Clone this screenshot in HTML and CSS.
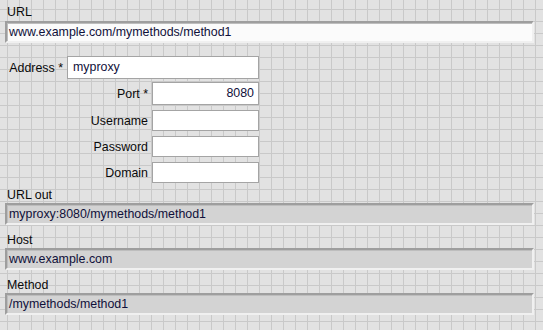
FILE: index.html
```html
<!DOCTYPE html>
<html>
<head>
<meta charset="utf-8">
<link rel="stylesheet" href="styles.css">
</head>
<body>
<div class="page">
  <div class="label label-url">URL</div>
  <div class="field field-in">www.example.com/mymethods/method1</div>

  <div class="form">
    <div class="row row-address">
      <span class="row-label">Address *</span>
      <div class="box box-wide">myproxy</div>
    </div>
    <div class="row row-port">
      <span class="row-label">Port *</span>
      <div class="box box-num">8080</div>
    </div>
    <div class="row row-small">
      <span class="row-label">Username</span>
      <div class="box"></div>
    </div>
    <div class="row row-small">
      <span class="row-label">Password</span>
      <div class="box"></div>
    </div>
    <div class="row row-small">
      <span class="row-label">Domain</span>
      <div class="box"></div>
    </div>
  </div>

  <div class="label label-out1">URL out</div>
  <div class="field field-out">myproxy:8080/mymethods/method1</div>
  <div class="label label-out">Host</div>
  <div class="field field-out">www.example.com</div>
  <div class="label label-out">Method</div>
  <div class="field field-out">/mymethods/method1</div>
</div>
</body>
</html>
```

FILE: styles.css
```css
html, body {
  margin: 0;
  padding: 0;
}
body {
  width: 543px;
  height: 330px;
  overflow: hidden;
  background-color: #e2e2e2;
  background-image:
    linear-gradient(to right, #c9c9c9 1px, transparent 1px),
    linear-gradient(to bottom, #c9c9c9 1px, transparent 1px);
  background-size: 12px 12px;
  background-position: 7px 9px;
  font-family: "Liberation Sans", Arial, sans-serif;
  font-size: 12.4px;
  color: #000;
}
.page {
  display: flex;
  flex-direction: column;
  padding: 5px 9px 0 5px;
}
.label {
  height: 14px;
  line-height: 14px;
  padding-left: 2px;
  color: #0a0a0a;
}
.label-url {
  margin-bottom: 2px;
}
.label-out1 {
  margin-top: 5px;
  margin-bottom: 1px;
}
.label-out {
  margin-top: 8px;
  margin-bottom: 1px;
}
.field {
  box-sizing: border-box;
  height: 22px;
  width: 529px;
  line-height: 18px;
  padding-left: 2px;
  border-style: solid;
  border-width: 2px;
  border-color: #9e9e9e #f0f0f0 #f0f0f0 #9e9e9e;
  box-shadow: inset 1px 1px 0 #bdbdbd;
  white-space: nowrap;
}
.field-in {
  background: #fbfbfb;
  color: #10103a;
}
.field-out {
  background: #d3d3d3;
  color: #10103a;
}
.form {
  display: flex;
  flex-direction: column;
  width: 254px;
  margin-top: 13px;
}
.row {
  display: flex;
  justify-content: flex-end;
  align-items: center;
  gap: 4px;
}
.row-label {
  white-space: nowrap;
  color: #0a0a0a;
}
.box {
  box-sizing: border-box;
  width: 107px;
  height: 21px;
  background: #ffffff;
  border: 1px solid #a4a4a4;
  line-height: 19px;
  padding: 0 5px;
  color: #10103a;
}
.row-address .box,
.row-port .box {
  height: 23px;
  line-height: 21px;
}
.box-wide {
  width: 192px;
}
.box-num {
  text-align: right;
  padding-right: 4px;
}
.row-port {
  margin-top: 3px;
}
.row-small {
  margin-top: 5px;
}
```
